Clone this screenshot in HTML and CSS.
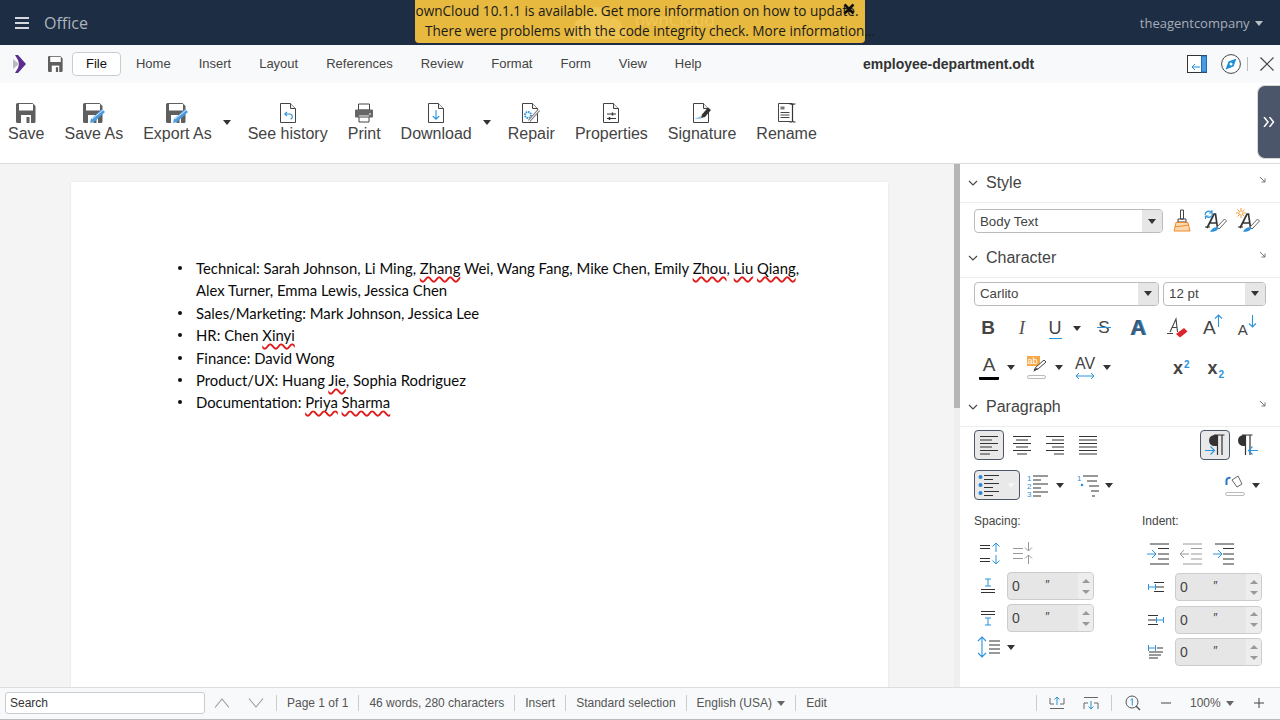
FILE: index.html
```html
<!DOCTYPE html>
<html lang="en">
<head>
  <meta charset="UTF-8" />
  <meta name="viewport" content="width=device-width, initial-scale=1.0" />
  <title>employee-department.odt - Office</title>
  <link rel="stylesheet" href="styles.css">
</head>
<body>
  <!-- ownCloud top bar -->
  <header class="topbar">
    <div class="burger"><span></span><span></span><span></span></div>
    <div class="app-name">Office</div>
    <div class="user-menu">theagentcompany <span class="caret caret-light"></span></div>
  </header>

  <div class="notice">
    <svg class="notice-logo" width="60" height="40" viewBox="0 0 60 40"><g fill="#eec452"><circle cx="28" cy="17" r="12"/><circle cx="14" cy="25" r="9"/><circle cx="44" cy="25" r="9"/><circle cx="6" cy="31" r="6"/><circle cx="52" cy="31" r="6"/><rect x="6" y="26" width="46" height="11"/></g></svg>
    <div class="notice-brand">ownCloud</div>
    <div class="notice-line">ownCloud 10.1.1 is available. Get more information on how to update.</div>
    <div class="notice-line">There were problems with the code integrity check. More information…</div>
    <svg class="notice-close" width="12" height="12" viewBox="0 0 12 12"><path d="M1.500 1.500l9 9M10.500 1.500l-9 9" stroke="#111" stroke-width="2.600"/></svg>
  </div>

  <!-- menu tabs -->
  <nav class="menubar">
    <svg class="logo" width="14" height="18" viewBox="0 0 14 18"><path d="M2 0h3l8 9-8 9H2l3-5 1-4-1-4z" fill="#5c2d8c"/><path d="M0 4l6 5-6 5z" fill="#bdb9c4"/></svg>
    <svg class="tab-save" width="15" height="16" viewBox="0 0 20 20" preserveAspectRatio="none"><use href="#i-floppy"/></svg>
    <div class="tab tab-active">File</div>
    <div class="tab">Home</div>
    <div class="tab">Insert</div>
    <div class="tab">Layout</div>
    <div class="tab">References</div>
    <div class="tab">Review</div>
    <div class="tab">Format</div>
    <div class="tab">Form</div>
    <div class="tab">View</div>
    <div class="tab">Help</div>
    <div class="doc-title">employee-department.odt</div>
    <div class="menu-right">
      <svg width="20" height="18" viewBox="0 0 20 18"><rect x=".5" y=".5" width="19" height="17" fill="#fff" stroke="#333"/><rect x="14.500" y="1" width="5" height="16" fill="#4a9be0" stroke="#1b6fb8"/><path d="M13 12H5M8 9l-3 3 3 3" fill="none" stroke="#1b8fe0"/></svg>
      <svg width="20" height="20" viewBox="0 0 20 20"><circle cx="10" cy="10" r="9.400" fill="#fff" stroke="#444"/><path d="M15.500 4.500L12.500 12.500 4.500 15.500 7.500 7.500z" fill="#1b8fd8"/><circle cx="10" cy="10" r="1.500" fill="#fff"/></svg>
      <div class="menu-sep"></div>
      <svg width="14" height="14" viewBox="0 0 14 14"><path d="M.5 .5l13 13M13.500 .5l-13 13" stroke="#444" stroke-width="1.200"/></svg>
    </div>
  </nav>

  <!-- file toolbar -->
  <section class="toolbar">
    <div class="tool tool-save"><svg width="20" height="20" viewBox="0 0 20 20"><use href="#i-floppy"/></svg><span>Save</span></div>
    <div class="tool tool-saveas"><svg width="22" height="20" viewBox="0 0 22 20"><use href="#i-floppy"/><use href="#i-pen"/></svg><span>Save As</span></div>
    <div class="tool tool-export"><svg width="22" height="20" viewBox="0 0 22 20"><use href="#i-floppy"/><use href="#i-pen"/></svg><span>Export As</span></div>
    <span class="caret tool-caret caret-export"></span>
    <div class="tool tool-history"><svg width="20" height="20" viewBox="0 0 20 20"><use href="#i-page"/><path d="M12.500 16c2.500-.5 2.500-5-1-5H7M9 8.800L6.800 11 9 13.200" fill="none" stroke="#2b93dc" stroke-width="1.100"/></svg><span>See history</span></div>
    <div class="tool tool-print"><svg width="20" height="20" viewBox="0 0 20 20"><path d="M4.500 1h11v6h-11zM5 14h10v5H5z" fill="#fff" stroke="#444"/><path d="M1 7.500a1 1 0 0 1 1-1h16a1 1 0 0 1 1 1v6a1 1 0 0 1-1 1H15v-2H5v2H2a1 1 0 0 1-1-1z" fill="#666"/><path d="M15 11h2" stroke="#fff"/></svg><span>Print</span></div>
    <div class="tool tool-download"><svg width="20" height="20" viewBox="0 0 20 20"><use href="#i-page"/><path d="M10 7v9M6.800 13l3.200 3.200 3.200-3.200" fill="none" stroke="#2b93dc" stroke-width="1.100"/></svg><span>Download</span></div>
    <span class="caret tool-caret caret-download"></span>
    <div class="tool tool-repair"><svg width="22" height="20" viewBox="0 0 22 20"><use href="#i-page"/><circle cx="8" cy="12" r="3" fill="none" stroke="#2b93dc" stroke-width="2" stroke-dasharray="1.500 .8"/><path d="M9 18L19 7" stroke="#888" stroke-width="3"/><path d="M9 18L19 7" stroke="#fff" stroke-width="1"/></svg><span>Repair</span></div>
    <div class="tool tool-props"><svg width="20" height="20" viewBox="0 0 20 20"><use href="#i-page"/><path d="M6 11h9M6 15.500h9" stroke="#333"/><path d="M11.500 9.500v3M8.500 14v3" stroke="#333" stroke-width="1.500"/></svg><span>Properties</span></div>
    <div class="tool tool-sign"><svg width="22" height="20" viewBox="0 0 22 20"><use href="#i-page"/><path d="M3 16l7-3v3z" fill="#9ccdf0"/><path d="M10 15l1-3.500 6-7 3 2.500-6 7z" fill="#333"/></svg><span>Signature</span></div>
    <div class="tool tool-rename"><svg width="20" height="20" viewBox="0 0 20 20"><path d="M1.500 .5h14v18h-14z" fill="#fff" stroke="#444"/><path d="M3.500 3.500h4v3h-4z" fill="#777"/><path d="M3.500 9.500h9M3.500 12h9M3.500 14.500h9" stroke="#444"/><path d="M15.500 1v18" stroke="#fff" stroke-width="4"/><path d="M12.500 1h2l1 1 1-1h2M12.500 19h2l1-1 1 1h2M15.500 2v16" stroke="#333" stroke-width="1.200" fill="none"/></svg><span>Rename</span></div>
  </section>
  <div class="toolbar-handle">
    <svg width="12" height="10" viewBox="0 0 12 10"><path d="M1 0l4 5-4 5M6.500 0l4 5-4 5" fill="none" stroke="#fff" stroke-width="1.500"/></svg>
  </div>

  <div class="workspace">
    <main class="doc-area">
      <div class="page">
        <ul class="doc-list">
          <li>Technical: Sarah Johnson, Li Ming, <span class="typo">Zhang</span> Wei, Wang Fang, Mike Chen, Emily <span class="typo">Zhou</span>, <span class="typo">Liu</span> <span class="typo">Qiang</span>, Alex Turner, Emma Lewis, Jessica Chen</li>
          <li>Sales/Marketing: Mark Johnson, Jessica Lee</li>
          <li>HR: Chen <span class="typo">Xinyi</span></li>
          <li>Finance: David Wong</li>
          <li>Product/UX: Huang <span class="typo">Jie</span>, Sophia Rodriguez</li>
          <li>Documentation: <span class="typo">Priya</span> <span class="typo">Sharma</span></li>
        </ul>
      </div>
    </main>
    <div class="doc-scroll"><div class="doc-thumb"></div></div>

    <!-- sidebar -->
    <aside class="sidebar">
      <div class="panel-head">
        <svg class="chev" width="10" height="6" viewBox="0 0 10 6"><path d="M1 1l4 4 4-4" fill="none" stroke="#444" stroke-width="1.100"/></svg>
        <span>Style</span><svg class="more" width="6" height="6" viewBox="0 0 6 6"><use href="#i-more"/></svg>
      </div>
      <div class="row row-style">
        <div class="combo combo-style"><span>Body Text</span><i class="combo-btn"><span class="caret"></span></i></div>
        <svg class="style-a" width="18" height="24" viewBox="0 0 18 24"><path d="M7.500 1h3v9h-3zM5 10h8v3H5z" fill="#fff" stroke="#444"/><path d="M3 13.500h12l2 8.500H1z" fill="#fbd8b0" stroke="#f08a28"/><path d="M2 18l14-2" stroke="#f08a28"/></svg>
        <svg class="style-b" width="24" height="24" viewBox="0 0 24 24"><use href="#i-style-a"/><path d="M2 6a4 4 0 0 1 7-2.500M9.500 4.500a4 4 0 0 1-7 2.500M9 1v3H6M2.500 10V7h3" fill="none" stroke="#2b93dc" stroke-width="1.100"/></svg>
        <svg class="style-c" width="24" height="24" viewBox="0 0 24 24"><use href="#i-style-a"/><circle cx="5" cy="4" r="2.200" fill="#fff" stroke="#f59a33"/><path d="M5 -1v2M5 7v2M0 4h2M8 4h2M1.500 .5l1.500 1.500M7 6l1.500 1.500M8.500 .5L7 2M3 6L1.500 7.500" stroke="#f59a33"/></svg>
      </div>

      <div class="panel-head">
        <svg class="chev" width="10" height="6" viewBox="0 0 10 6"><path d="M1 1l4 4 4-4" fill="none" stroke="#444" stroke-width="1.100"/></svg>
        <span>Character</span><svg class="more" width="6" height="6" viewBox="0 0 6 6"><use href="#i-more"/></svg>
      </div>
      <div class="row row-font">
        <div class="combo combo-font"><span>Carlito</span><i class="combo-btn"><span class="caret"></span></i></div>
        <div class="combo combo-size"><span>12 pt</span><i class="combo-btn"><span class="caret"></span></i></div>
      </div>
      <div class="row row-char1">
        <span class="glyph g-b">B</span>
        <span class="glyph g-i">I</span>
        <span class="glyph g-u"><span>U</span></span><span class="caret c-u"></span>
        <span class="glyph g-s">S</span>
        <span class="glyph g-shadow">A</span>
        <svg class="g-clear" width="22" height="22" viewBox="0 0 22 22"><path d="M3 15L9 2l1.500 13M5 10.500h5.500" fill="none" stroke="#444" stroke-width="1.100"/><path d="M0 16.500h6" stroke="#444"/><path d="M9 17l8-6 3.500 3.500-7.500 6z" fill="#d9252c"/></svg>
        <span class="glyph g-grow">A<svg width="9" height="13" viewBox="0 0 9 13"><path d="M4.500 13V1M1 4.500l3.500-3.500 3.500 3.500" fill="none" stroke="#2b93dc" stroke-width="1.100"/></svg></span>
        <span class="glyph g-shrink">A<svg width="9" height="13" viewBox="0 0 9 13"><path d="M4.500 0v12M1 8.500l3.500 3.500 3.500-3.500" fill="none" stroke="#2b93dc" stroke-width="1.100"/></svg></span>
      </div>
      <div class="row row-char2">
        <span class="glyph g-color">A</span><span class="caret c-color"></span>
        <svg class="g-hl" width="22" height="26" viewBox="0 0 22 26"><rect x="1" y="1" width="13" height="10" fill="#f7a94a"/><text x="1.500" y="9" font-family="Liberation Sans" font-size="9" fill="#fff">ab</text><path d="M8 15l2-3 8-7 2 2-8 7z" fill="#fff" stroke="#444"/><path d="M7 17l3-4 2 1z" fill="#333"/><rect x="1.500" y="20.500" width="18" height="3" rx="1.500" fill="#fff" stroke="#bbb"/></svg>
        <span class="caret c-hl"></span>
        <span class="g-av">AV<svg width="20" height="8" viewBox="0 0 20 8"><path d="M1 4h18M4 1L1 4l3 3M16 1l3 3-3 3" fill="none" stroke="#2b93dc"/></svg></span>
        <span class="caret c-av"></span>
        <span class="g-script g-sup">x<sup>2</sup></span>
        <span class="g-script g-sub">x<sub>2</sub></span>
      </div>

      <div class="panel-head">
        <svg class="chev" width="10" height="6" viewBox="0 0 10 6"><path d="M1 1l4 4 4-4" fill="none" stroke="#444" stroke-width="1.100"/></svg>
        <span>Paragraph</span><svg class="more" width="6" height="6" viewBox="0 0 6 6"><use href="#i-more"/></svg>
      </div>
      <div class="row row-align">
        <div class="tbtn tbtn-on"><svg width="20" height="20" viewBox="0 0 20 20"><path d="M1 1.500h18M1 5h12M1 8.500h18M1 12h12M1 15.500h18M1 19h10" stroke="#333"/></svg></div>
        <div class="tbtn"><svg width="20" height="20" viewBox="0 0 20 20"><path d="M1 1.500h18M4 5h12M1 8.500h18M4 12h12M1 15.500h18M5 19h10" stroke="#333"/></svg></div>
        <div class="tbtn"><svg width="20" height="20" viewBox="0 0 20 20"><path d="M1 1.500h18M7 5h12M1 8.500h18M7 12h12M1 15.500h18M9 19h10" stroke="#333"/></svg></div>
        <div class="tbtn"><svg width="20" height="20" viewBox="0 0 20 20"><path d="M1 1.500h18M1 5h18M1 8.500h18M1 12h18M1 15.500h18M1 19h18" stroke="#333"/></svg></div>
        <div class="tbtn tbtn-on tbtn-ltr"><svg width="24" height="24" viewBox="0 0 24 24"><path d="M14 2h-2.500a5.500 5.500 0 0 0 0 11H14z" fill="#333"/><path d="M14.500 2v20M19 2v20M11 2h10.500" stroke="#333" stroke-width="1.200" fill="none"/><path d="M2 17.500h9.500M7.500 13.500l4 4-4 4" fill="none" stroke="#2b93dc" stroke-width="1.100"/></svg></div>
        <div class="tbtn tbtn-rtl"><svg width="24" height="24" viewBox="0 0 24 24"><path d="M9 2H7.500a5.500 5.500 0 0 0 0 11H9z" fill="#333"/><path d="M9.500 2v20M14 2v20M6 2h10.500" stroke="#333" stroke-width="1.200" fill="none"/><path d="M22 17.500h-9.500M16.500 13.500l-4 4 4 4" fill="none" stroke="#2b93dc" stroke-width="1.100"/></svg></div>
      </div>
      <div class="row row-lists">
        <div class="tbtn tbtn-on tbtn-bullets"><svg width="21" height="22" viewBox="0 0 21 22"><use href="#i-bullets"/></svg><span class="caret caret-white"></span></div>
        <svg class="l-num" width="22" height="24" viewBox="0 0 22 24"><path d="M6 3h15M6 7h8M6 11h15M6 15h8M6 19h15M6 23h8" stroke="#333"/><text x="0" y="8" class="num-mark">1</text><text x="0" y="15.500" class="num-mark">2</text><text x="0" y="23.500" class="num-mark">3</text></svg>
        <span class="caret c-num"></span>
        <svg class="l-out" width="22" height="24" viewBox="0 0 22 24"><path d="M6 3h15M10 8h10M12 13h10M14 18h8M15 23h3" stroke="#333"/><text x="0" y="8" class="num-mark">1</text><circle cx="5" cy="12" r="1.300" fill="#2b93dc"/></svg>
        <span class="caret c-out"></span>
        <svg class="l-fill" width="20" height="24" viewBox="0 0 20 24"><path d="M7 7l6-4 4 8-5 3z" fill="#fff" stroke="#666"/><path d="M1.500 12V7a3 3 0 0 1 4-2" fill="none" stroke="#2b78c8" stroke-width="2"/><rect x=".5" y="19.500" width="19" height="3" rx="1.500" fill="#fff" stroke="#bbb"/></svg>
        <span class="caret c-fill"></span>
      </div>

      <div class="para-cols">
        <div class="col col-spacing">
          <div class="col-label">Spacing:</div>
          <div class="icon-line">
            <svg width="22" height="24" viewBox="0 0 22 24"><path d="M1 4.500h10M1 7.500h10M1 17.500h10M1 20.500h10" stroke="#333"/><path d="M17 11V2M13.500 5.500L17 2l3.500 3.500M17 14v9M13.500 19.500L17 23l3.500-3.500" fill="none" stroke="#2b93dc"/></svg>
            <svg width="22" height="24" viewBox="0 0 22 24"><path d="M1 7.500h10M1 12.500h10M1 17.500h10" stroke="#999"/><path d="M16.500 1v9M13 6.500l3.500 3.500 3.500-3.500M16.500 23v-9M13 17.500l3.500-3.500 3.500 3.500" fill="none" stroke="#999"/></svg>
          </div>
          <div class="spin-line">
            <svg width="16" height="16" viewBox="0 0 16 16"><path d="M5 1h6M5 8h6M8 1v7" stroke="#2b93dc"/><path d="M1 11.500h14M1 14.500h14" stroke="#333"/></svg>
            <div class="spin"><b>0</b><em>″</em><i class="spin-btns"><u class="up"></u><u class="down"></u></i></div>
          </div>
          <div class="spin-line">
            <svg width="16" height="16" viewBox="0 0 16 16"><path d="M1 1.500h14M1 4.500h14" stroke="#333"/><path d="M5 8h6M5 15h6M8 8v7" stroke="#2b93dc"/></svg>
            <div class="spin"><b>0</b><em>″</em><i class="spin-btns"><u class="up"></u><u class="down"></u></i></div>
          </div>
          <div class="linespace">
            <svg width="24" height="22" viewBox="0 0 24 22"><path d="M5 1v20M1 5l4-4 4 4M1 17l4 4 4-4" fill="none" stroke="#2b93dc" stroke-width="1.100"/><path d="M12 5h11M12 9h11M12 13h11M12 17h11" stroke="#333"/></svg>
            <span class="caret"></span>
          </div>
        </div>
        <div class="col col-indent">
          <div class="col-label">Indent:</div>
          <div class="icon-line icon-line-indent">
            <svg width="23" height="22" viewBox="0 0 23 22"><path d="M4 1h19M12 5.500h11M12 11h11M12 16h11M4 21h19" stroke="#333"/><path d="M1 11h9M6 7l4 4-4 4" fill="none" stroke="#2b93dc"/></svg>
            <svg width="23" height="22" viewBox="0 0 23 22"><path d="M4 1h19M12 5.500h11M12 11h11M12 16h11M4 21h19" stroke="#999"/><path d="M10 11H1M5 7l-4 4 4 4" fill="none" stroke="#999"/></svg>
            <svg width="23" height="22" viewBox="0 0 23 22"><path d="M3 1h19M11 5.500h11M11 11h11M11 16h11M11 21h11" stroke="#333"/><path d="M1 11h9M6 7l4 4-4 4" fill="none" stroke="#2b93dc"/></svg>
          </div>
          <div class="spin-line">
            <svg width="16" height="12" viewBox="0 0 16 12"><path d="M6 1.500h10M8 6h8M6 10.500h10" stroke="#333"/><path d="M.5 3v6M.5 6h7M7.500 3v6" stroke="#2b93dc" fill="none"/></svg>
            <div class="spin"><b>0</b><em>″</em><i class="spin-btns"><u class="up"></u><u class="down"></u></i></div>
          </div>
          <div class="spin-line">
            <svg width="16" height="12" viewBox="0 0 16 12"><path d="M0 1.500h10M0 6h8M0 10.500h10" stroke="#333"/><path d="M8.500 3v6M8.500 6h7M15.500 3v6" stroke="#2b93dc" fill="none"/></svg>
            <div class="spin"><b>0</b><em>″</em><i class="spin-btns"><u class="up"></u><u class="down"></u></i></div>
          </div>
          <div class="spin-line">
            <svg width="16" height="14" viewBox="0 0 16 14"><path d="M9 3h6M1 7h14M1 10h12M1 13h9" stroke="#333"/><path d="M.5 0v6M.5 3h7M7.500 0v6" stroke="#2b93dc" fill="none"/></svg>
            <div class="spin"><b>0</b><em>″</em><i class="spin-btns"><u class="up"></u><u class="down"></u></i></div>
          </div>
        </div>
      </div>
    </aside>
  </div>

  <!-- status bar -->
  <footer class="statusbar">
    <div class="search">Search</div>
    <svg class="nav-arrow" width="16" height="10" viewBox="0 0 16 10"><path d="M1 9.500L8 1l7 8.500" fill="none" stroke="#999" stroke-width="1.100"/></svg>
    <svg class="nav-arrow" width="16" height="10" viewBox="0 0 16 10"><path d="M1 .5L8 9l7-8.500" fill="none" stroke="#999" stroke-width="1.100"/></svg>
    <span class="st">Page 1 of 1</span>
    <span class="st">46 words, 280 characters</span>
    <span class="st">Insert</span>
    <span class="st">Standard selection</span>
    <span class="st">English (USA) <span class="caret caret-gray"></span></span>
    <span class="st">Edit</span>
    <div class="status-right">
      <div class="st-sep"></div>
      <svg class="sz-a" width="16" height="14" viewBox="0 0 16 14"><path d="M1 2v6h4M15 2v6h-4M1 12.500h14" fill="none" stroke="#666"/><path d="M8 9V1M5.500 3.500L8 1l2.500 2.500" fill="none" stroke="#2b93dc"/></svg>
      <svg class="sz-b" width="16" height="14" viewBox="0 0 16 14"><path d="M1 1.500h14M1 13V7h4M15 13V7h-4" fill="none" stroke="#666"/><path d="M8 5v8M5.500 10.500L8 13l2.500-2.500" fill="none" stroke="#2b93dc"/></svg>
      <div class="st-sep st-sep-two"></div>
      <svg class="zoom-one" width="16" height="16" viewBox="0 0 16 16"><circle cx="7" cy="7" r="6" fill="none" stroke="#555"/><path d="M11 11l4 4" stroke="#555" stroke-width="1.500"/><path d="M5.500 5L7.300 3.700v6.800" fill="none" stroke="#2b93dc"/></svg>
      <svg class="zoom-minus" width="10" height="2" viewBox="0 0 10 2"><path d="M0 1h10" stroke="#444"/></svg>
      <span class="zoom-val">100% <span class="caret caret-gray"></span></span>
      <svg class="zoom-plus" width="10" height="10" viewBox="0 0 10 10"><path d="M0 5h10M5 0v10" stroke="#444"/></svg>
    </div>
  </footer>

  <!-- shared icons -->
  <svg class="defs" width="0" height="0">
    <symbol id="i-floppy" viewBox="0 0 20 20" width="20" height="20">
      <path d="M1.500 0h15l3 3v15.500a1.500 1.500 0 0 1-1.500 1.500H1.500A1.500 1.500 0 0 1 0 18.500v-17A1.500 1.500 0 0 1 1.500 0z" fill="#5f5f5f"/>
      <rect x="3" y="1" width="14" height="6.500" fill="#fff"/>
      <rect x="5" y="12" width="10" height="8" fill="#fff"/>
      <rect x="10.500" y="14" width="3" height="6" fill="#5f5f5f"/>
    </symbol>
    <symbol id="i-pen" viewBox="0 0 22 20" width="22" height="20">
      <path d="M7 20l1-4L19 6l3 3-11 10z" fill="#4a9be0"/>
      <path d="M9 16L20 7" stroke="#fff" stroke-width=".8"/>
    </symbol>
    <symbol id="i-page" viewBox="0 0 20 20" width="20" height="20">
      <path d="M2.500 .5h10l5 5v14h-15z" fill="#fff" stroke="#444"/>
      <path d="M12.500 .5v5h5" fill="#eee" stroke="#444"/>
    </symbol>
    <symbol id="i-more" viewBox="0 0 6 6" width="6" height="6">
      <path d="M0 0l5 5M5 1.500V5H1.500" fill="none" stroke="#777"/>
    </symbol>
    <symbol id="i-style-a" viewBox="0 0 24 24" width="24" height="24">
      <path d="M4 19L11 5h1.500l2 14M6.500 14h8" fill="none" stroke="#333" stroke-width="1.700"/>
      <path d="M2 18h5" stroke="#333"/>
      <path d="M14 18L21.500 10l2 2-7.500 8z" fill="#fff" stroke="#666"/>
      <path d="M7 22.500c2-3 5-5 8-4 .5 2.500-3.500 5-8 4z" fill="#2b93dc"/>
    </symbol>
    <symbol id="i-bullets" viewBox="0 0 21 22" width="21" height="22">
      <circle cx="2.500" cy="3" r="2" fill="#2e84cf"/><circle cx="2.500" cy="11" r="2" fill="#2e84cf"/><circle cx="2.500" cy="19" r="2" fill="#2e84cf"/>
      <path d="M6 1.500h15M6 5.500h9M6 9.500h15M6 13.500h9M6 17.500h15M6 21.500h9" stroke="#333"/>
    </symbol>
  </svg>
</body>
</html>
```

FILE: styles.css
```css
html, body {
  margin: 0;
  padding: 0;
  height: 720px;
  overflow: hidden;
}
body {
  display: flex;
  flex-direction: column;
  position: relative;
  font-family: "Liberation Sans", Arial, sans-serif;
  color: #333;
  background: #fff;
}
.defs {
  position: absolute;
}

/* carets */
.caret {
  display: inline-block;
  flex: none;
  width: 0;
  height: 0;
  border-left: 4px solid transparent;
  border-right: 4px solid transparent;
  border-top: 5px solid #333;
}
.caret-light {
  border-top-color: #b8bfc9;
  margin-left: 2px;
  vertical-align: 2px;
}
.caret-gray {
  border-top-color: #666;
  margin-left: 2px;
  vertical-align: 1px;
}
.caret-white {
  border-top-color: #f5f5f5;
}

/* top bar */
.topbar {
  height: 45px;
  flex: none;
  background: #1d2d44;
  display: flex;
  align-items: center;
  padding: 0 15px;
  box-sizing: border-box;
  font-family: "Open Sans", sans-serif;
  color: #b3b9c3;
}
.burger {
  display: flex;
  flex-direction: column;
  gap: 3px;
  width: 14px;
}
.burger span {
  height: 2px;
  background: #d5d8dd;
}
.app-name {
  margin-left: 15px;
  font-size: 16px;
  color: #aeb4bd;
}
.user-menu {
  margin-left: auto;
  font-size: 13px;
  padding-right: 2px;
  color: #a7aeb8;
}
.notice {
  position: absolute;
  left: 415px;
  top: 0;
  width: 450px;
  height: 43px;
  background: #e7b93f;
  border-radius: 0 0 4px 4px;
  font-family: "Open Sans", sans-serif;
  font-size: 13.600px;
  color: #1b1b1b;
  text-align: center;
  padding-top: 1px;
  box-sizing: border-box;
}
.notice-line {
  position: relative;
  height: 20px;
  line-height: 20px;
  white-space: nowrap;
  padding-right: 6px;
}
.notice-line + .notice-line {
  padding-left: 10px;
  padding-right: 0;
}
.notice-logo {
  position: absolute;
  left: 154px;
  top: 2px;
}
.notice-brand {
  position: absolute;
  left: 220px;
  top: 10px;
  font-size: 17px;
  line-height: 20px;
  color: #efc659;
}
.notice-close {
  position: absolute;
  right: 10px;
  top: 3px;
}

/* menu tabs */
.menubar {
  height: 38px;
  flex: none;
  background: #f8f9fa;
  display: flex;
  align-items: center;
  font-size: 13px;
  color: #444;
  position: relative;
}
.logo {
  margin-left: 13px;
}
.tab-save {
  margin-left: 21px;
  margin-right: 9px;
}
.tab {
  padding: 0 13px;
  line-height: 22px;
  border: 1px solid transparent;
}
.tab-active {
  border-color: #ccc;
  border-radius: 4px;
  background: #fff;
  color: #111;
  margin-right: 1px;
}
.doc-title {
  position: absolute;
  left: 863px;
  top: 11px;
  line-height: 16px;
  font-size: 14px;
  font-weight: bold;
  color: #333;
}
.menu-right {
  margin-left: auto;
  display: flex;
  align-items: center;
  padding-right: 6px;
}
.menu-right svg:nth-child(2) {
  margin-left: 14px;
}
.menu-sep {
  width: 1px;
  height: 14px;
  background: #bbb;
  margin: 0 12px 0 6px;
}

/* file toolbar */
.toolbar {
  height: 81px;
  flex: none;
  border-bottom: 1px solid #dcdcdc;
  box-sizing: border-box;
  background: #fff;
  display: flex;
  align-items: flex-start;
  padding-top: 20px;
  font-size: 16px;
  color: #444;
}
.tool {
  display: flex;
  flex-direction: column;
  align-items: center;
}
.tool svg {
  display: block;
  height: 20px;
}
.tool span {
  margin-top: 1px;
  line-height: 19px;
}
.tool-save { margin-left: 8px; }
.tool-saveas { margin-left: 20px; }
.tool-export { margin-left: 20px; }
.tool-history { margin-left: 17px; }
.tool-print { margin-left: 20px; }
.tool-download { margin-left: 20px; }
.tool-repair { margin-left: 17px; }
.tool-props { margin-left: 20px; }
.tool-sign { margin-left: 20px; }
.tool-rename { margin-left: 20px; }
.tool-caret {
  margin-top: 17px;
}
.caret-export { margin-left: 11px; }
.caret-download { margin-left: 11px; }
.toolbar-handle {
  position: absolute;
  left: 1257px;
  top: 85px;
  width: 23px;
  height: 74px;
  background: #4c566a;
  border-radius: 8px 0 0 8px;
  border: 1px solid #d8d8d8;
  border-right: 0;
  box-sizing: border-box;
  display: flex;
  align-items: center;
  justify-content: flex-end;
  padding-right: 5px;
}

/* document */
.workspace {
  flex: 1;
  min-height: 0;
  display: flex;
}
.doc-area {
  width: 954px;
  flex: none;
  background: #f4f4f4;
  overflow: hidden;
  padding: 18px 0 0 71px;
  box-sizing: border-box;
}
.page {
  width: 817px;
  height: 520px;
  background: #fff;
  box-shadow: 0 0 2px #e4e4e4;
  padding: 75px 0 0 125px;
  box-sizing: border-box;
}
.doc-list {
  list-style: none;
  margin: 0;
  padding: 0;
  width: 610px;
  font-family: Lato, sans-serif;
  font-size: 14.850px;
  line-height: 22.400px;
  color: #0a0a0a;
}
.doc-list li {
  position: relative;
}
.doc-list li::before {
  content: "";
  position: absolute;
  left: -18px;
  top: 9px;
  width: 4px;
  height: 4px;
  border-radius: 50%;
  background: #111;
}
.typo {
  text-decoration: underline wavy #e01b1b 2px;
  text-underline-offset: 2px;
  text-decoration-skip-ink: none;
}
.doc-scroll {
  width: 6px;
  flex: none;
  background: #efefef;
}
.doc-thumb {
  height: 244px;
  background: #b6b6b6;
}

/* sidebar */
.sidebar {
  width: 320px;
  flex: none;
  background: #fff;
  font-size: 13.300px;
  color: #444;
  position: relative;
}
.panel-head {
  display: flex;
  align-items: center;
  height: 39px;
  border-bottom: 1px solid #eee;
  box-sizing: border-box;
  font-size: 16px;
  padding: 0 14px 0 8px;
}
.chev {
  margin-right: 8px;
}
.more {
  margin-left: auto;
  margin-top: -7px;
}
.row {
  display: flex;
  align-items: center;
  padding-left: 14px;
}
.combo {
  height: 24px;
  border: 1px solid #bbb;
  border-radius: 4px;
  box-sizing: border-box;
  display: flex;
  align-items: center;
  padding-left: 5px;
  overflow: hidden;
  color: #444;
}
.combo-btn {
  margin-left: auto;
  width: 20px;
  height: 100%;
  background: #e6e6e6;
  display: flex;
  align-items: center;
  justify-content: center;
}
.row-style {
  height: 36px;
}
.combo-style {
  width: 189px;
}
.style-a { margin-left: 10px; }
.style-b { margin-left: 12px; overflow: visible; }
.style-c { margin-left: 9px; overflow: visible; }
.row-font {
  height: 31px;
  gap: 4px;
}
.combo-font { width: 185px; }
.combo-size { width: 103px; }

.glyph {
  display: inline-flex;
  align-items: flex-start;
  justify-content: center;
  color: #444;
  line-height: 20px;
}
.row-char1 {
  height: 38px;
}
.g-b, .g-i, .g-u, .g-s, .g-shadow {
  width: 24px;
  flex: none;
}
.g-b { font-weight: bold; font-size: 19px; margin-left: 2px; }
.g-i {
  font-family: "Liberation Serif", serif;
  font-style: italic;
  font-size: 19px;
  margin-left: 10px;
  color: #555;
}
.g-u {
  font-size: 18px;
  margin-left: 9px;
}
.g-u span {
  border-bottom: 1.500px solid #2b93dc;
  line-height: 20px;
}
.c-u { margin-left: 6px; }
.g-s {
  font-size: 17px;
  margin-left: 11px;
  position: relative;
}
.g-s::after {
  content: "";
  position: absolute;
  left: 5px;
  right: 5px;
  top: 9px;
  height: 1px;
  background: #2b93dc;
}
.g-shadow {
  font-size: 22px;
  font-weight: bold;
  color: #3c5a78;
  margin-left: 10px;
  text-shadow: 1px 0 0 #2b93dc;
}
.g-clear { margin-left: 17px; flex: none; }
.g-grow { font-size: 19px; margin-left: 14px; }
.g-shrink { font-size: 15px; margin-left: 15px; padding-top: 4px; }
.g-grow svg { margin-top: -4px; margin-left: -2px; }
.g-shrink svg { margin-top: -5px; margin-left: 0; }

.row-char2 {
  height: 41px;
}
.g-color {
  font-size: 19px;
  margin-left: 5px;
  width: 20px;
  line-height: 20px;
  padding-bottom: 2px;
  border-bottom: 3px solid #000;
  border-radius: 1px;
}
.c-color { margin-left: 8px; }
.g-hl { margin-left: 11px; flex: none; }
.c-hl { margin-left: 7px; }
.g-av {
  display: inline-flex;
  flex-direction: column;
  align-items: center;
  width: 20px;
  font-size: 16px;
  line-height: 16px;
  margin-left: 12px;
  color: #444;
}
.c-av { margin-left: 8px; }
.g-script {
  font-size: 18px;
  font-weight: bold;
  color: #444;
  line-height: 20px;
}
.g-script sup, .g-script sub {
  font-size: 10px;
  line-height: 0;
  color: #2b93dc;
}
.g-script sup { vertical-align: 6px; margin-left: 1px; }
.g-script sub { vertical-align: -4px; margin-left: 1px; }
.g-sup { margin-left: 62px; }
.g-sub { margin-left: 18px; }

.row-align {
  height: 36px;
  gap: 3px;
}
.tbtn {
  width: 30px;
  height: 30px;
  display: flex;
  align-items: center;
  justify-content: center;
  box-sizing: border-box;
  border: 1px solid transparent;
  border-radius: 4px;
}
.tbtn-on {
  background: #e9e9e9;
  border-color: #4c566a;
}
.tbtn-ltr {
  margin-left: auto;
}
.tbtn-rtl {
  margin-right: 17px;
}
.row-lists {
  height: 44px;
}
.tbtn-bullets {
  width: 46px;
  gap: 8px;
  justify-content: flex-start;
  padding-left: 3px;
}
.num-mark {
  font-family: "Liberation Sans", sans-serif;
  font-size: 8px;
  fill: #2b93dc;
}
.row-lists svg { flex: none; }
.l-num { margin-left: 7px; }
.c-num { margin-left: 7px; }
.l-out { margin-left: 13px; }
.c-out { margin-left: 6px; }
.l-fill { margin-left: 112px; }
.c-fill { margin-left: 7px; }

.para-cols {
  display: flex;
  padding-left: 14px;
}
.col-spacing {
  width: 168px;
}
.col-label {
  font-size: 12px;
  line-height: 16px;
  margin-top: 6px;
  color: #444;
}
.icon-line {
  display: flex;
  gap: 11px;
  margin: 12px 0 7px 5px;
}
.icon-line-indent {
  gap: 10px;
  margin: 14px 0 8px 4px;
}
.spin-line {
  display: flex;
  align-items: center;
  height: 28px;
  margin-bottom: 4px;
}
.spin-line svg {
  width: 16px;
  margin-left: 6px;
  margin-right: 11px;
}
.col-indent .spin-line {
  margin-bottom: 4.500px;
}
.spin {
  width: 87px;
  height: 28px;
  border: 1px solid #ccc;
  border-radius: 4px;
  box-sizing: border-box;
  background: #e6e6e6;
  display: flex;
  align-items: center;
  padding-left: 4px;
  font-size: 14px;
  overflow: hidden;
  position: relative;
}
.spin b {
  font-weight: normal;
}
.spin em {
  font-style: italic;
  font-size: 12px;
  margin-left: 25px;
  margin-bottom: 3px;
}
.spin-btns {
  position: absolute;
  right: 0;
  top: 0;
  bottom: 0;
  width: 15px;
  background: #ededed;
  display: flex;
  flex-direction: column;
  align-items: center;
  justify-content: center;
  gap: 7px;
}
.spin-btns u {
  width: 0;
  height: 0;
  border-left: 4px solid transparent;
  border-right: 4px solid transparent;
}
.spin-btns .up { border-bottom: 4px solid #999; }
.spin-btns .down { border-top: 4px solid #999; }
.linespace {
  display: flex;
  align-items: center;
  gap: 6px;
  margin: 4px 0 0 3px;
}

/* status bar */
.statusbar {
  height: 33px;
  flex: none;
  background: #f8f9fa;
  border-top: 1px solid #ddd;
  border-bottom: 1px solid #bbb;
  box-sizing: border-box;
  display: flex;
  align-items: center;
  padding-bottom: 1px;
  font-size: 12px;
  color: #555;
}
.search {
  width: 200px;
  height: 22px;
  margin-left: 5px;
  background: #fff;
  border: 1px solid #ccc;
  border-radius: 3px;
  box-sizing: border-box;
  line-height: 20px;
  padding-left: 4px;
  color: #333;
}
.nav-arrow {
  margin-left: 9px;
}
.nav-arrow + .nav-arrow {
  margin-left: 18px;
  margin-right: 12px;
}
.st {
  padding: 0 10px;
  border-left: 1px solid #ccc;
  line-height: 16px;
}
.status-right {
  margin-left: auto;
  display: flex;
  align-items: center;
  padding-right: 16px;
}
.st-sep {
  width: 1px;
  height: 16px;
  background: #ccc;
}
.sz-a { margin-left: 12px; }
.sz-b { margin-left: 18px; }
.st-sep-two { margin-left: 12px; }
.zoom-one { margin-left: 13px; }
.zoom-minus { margin-left: 20px; }
.zoom-val { margin-left: 19px; }
.zoom-plus { margin-left: 20px; }
```
